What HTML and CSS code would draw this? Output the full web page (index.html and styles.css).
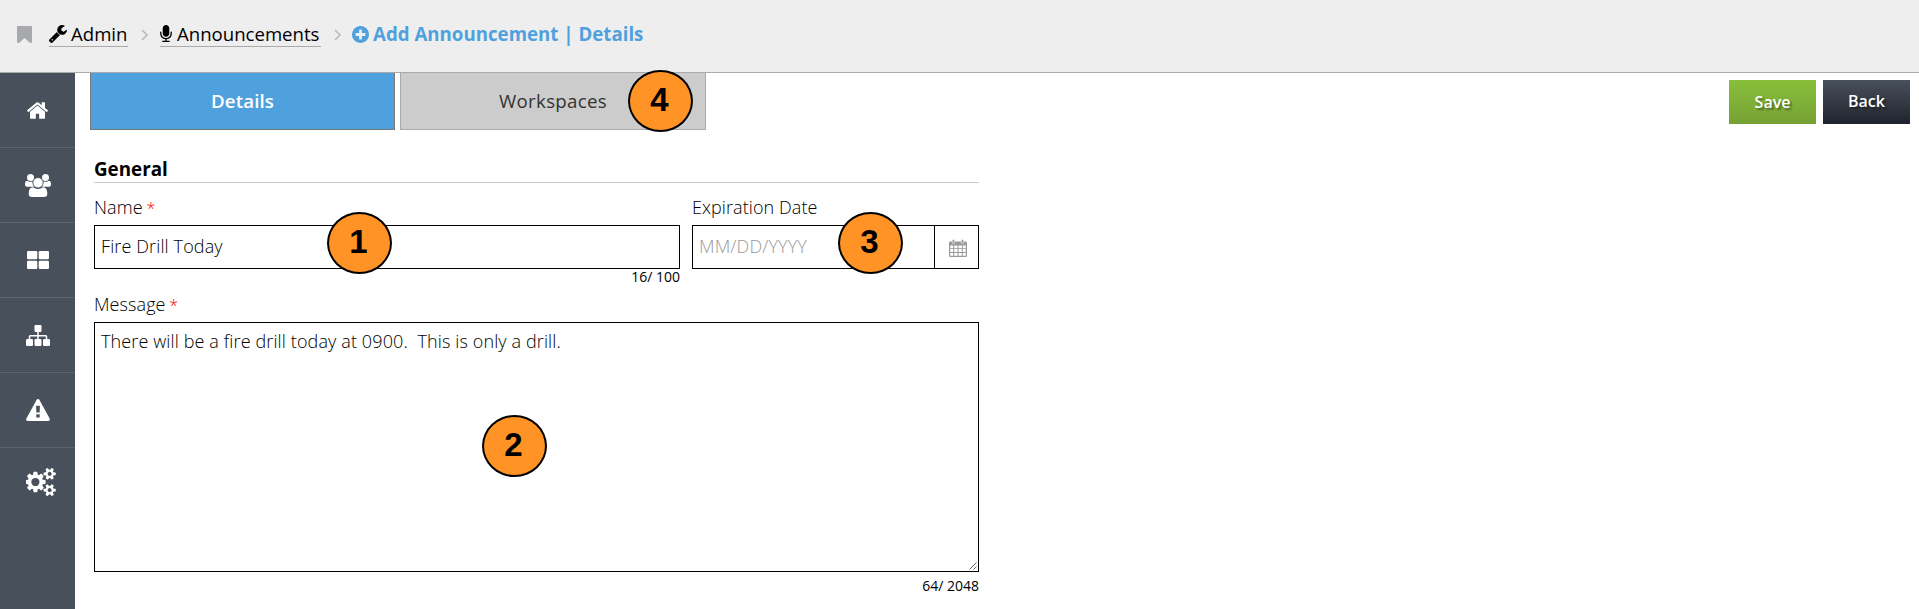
FILE: index.html
```html
<!DOCTYPE html>
<html lang="en">
<head>
<meta charset="utf-8">
<title>Add Announcement | Details</title>
<link rel="stylesheet" href="styles.css">
</head>
<body>
<header class="topbar">
  <svg class="ic-bookmark" viewBox="256 128 1280 1508" preserveAspectRatio="none"><path d="M1420 128q23 0 44 9 33 13 52.5 41t19.5 62v1289q0 34-19.5 62t-52.5 41q-19 8-44 8-48 0-83-32l-441-424-441 424q-36 33-83 33-23 0-44-9-33-13-52.5-41t-19.5-62v-1289q0-34 19.5-62t52.5-41q21-9 44-9h1048z"/></svg>
  <a class="crumb crumb-admin"><svg class="ic-wrench" viewBox="85 128 1641 1643"><path d="M448 1472q0-26-19-45t-45-19-45 19-19 45 19 45 45 19 45-19 19-45zm644-420l-682 682q-37 37-90 37-52 0-91-37l-106-108q-38-36-38-90 0-53 38-91l681-681q39 98 114.5 173.5t173.5 114.5zm634-435q0 39-23 106-47 134-164.5 217.5t-258.5 83.5q-185 0-316.5-131.5t-131.5-316.5 131.5-316.5 316.5-131.5q58 0 121.5 16.5t107.5 46.5q16 11 16 28t-16 28l-293 169v224l193 107q5-3 79-48.5t135.5-81 70.5-35.5q15 0 23.5 10t8.5 25z"/></svg><span class="crumb-text">Admin</span></a>
  <svg class="chevron" viewBox="0 0 7 12"><path d="M1 1l5 5-5 5"/></svg>
  <a class="crumb crumb-list"><svg class="ic-mic" viewBox="320 0 1152 1664"><path d="M1472 704v128q0 221-147.500 384.500t-364.500 187.500v132h256q26 0 45 19t19 45-19 45-45 19h-640q-26 0-45-19t-19-45 19-45 45-19h256v-132q-217-24-364.500-187.500t-147.500-384.500v-128q0-26 19-45t45-19 45 19 19 45v128q0 185 131.500 316.500t316.500 131.500 316.500-131.500 131.500-316.500v-128q0-26 19-45t45-19 45 19 19 45zm-256-384v512q0 132-94 226t-226 94-226-94-94-226v-512q0-132 94-226t226-94 226 94 94 226z"/></svg><span class="crumb-text">Announcements</span></a>
  <svg class="chevron" viewBox="0 0 7 12"><path d="M1 1l5 5-5 5"/></svg>
  <h1 class="title"><svg class="ic-plus" viewBox="128 128 1536 1536"><path d="M1344 960v-128q0-26-19-45t-45-19h-256v-256q0-26-19-45t-45-19h-128q-26 0-45 19t-19 45v256h-256q-26 0-45 19t-19 45v128q0 26 19 45t45 19h256v256q0 26 19 45t45 19h128q26 0 45-19t19-45v-256h256q26 0 45-19t19-45zm320-64q0 209-103 385.500t-279.500 279.500-385.500 103-385.500-103-279.500-279.500-103-385.500 103-385.500 279.500-279.500 385.500-103 385.500 103 279.500 279.500 103 385.500z"/></svg><span class="title-text">Add Announcement | Details</span></h1>
</header>
<div class="body">
  <nav class="sidebar">
    <a class="side-item"><svg class="ic-home" viewBox="89 253 1614 1283"><path d="M1472 992v480q0 26-19 45t-45 19h-384v-384h-256v384h-384q-26 0-45-19t-19-45v-480q0-1 .5-3t.5-3l575-474 575 474q1 2 1 6zm223-69l-62 74q-8 9-21 11h-3q-13 0-21-7l-692-577-692 577q-12 8-24 7-13-2-21-11l-62-74q-8-10-7-23.500t11-21.500l719-599q32-26 76-26t76 26l244 204v-195q0-14 9-23t23-9h192q14 0 23 9t9 23v408l219 182q10 8 11 21.500t-7 23.500z"/></svg></a>
    <a class="side-item"><svg class="ic-users" viewBox="0 0 26 23"><circle cx="5.500" cy="3.500" r="3.500"/><circle cx="20.500" cy="3.500" r="3.500"/><path d="M2.600 7Q5.500 8.600 7.500 7.200 7 10.400 9 12.800H3Q0 12.800 0 10.400 0 7.200 1.500 7zM23.400 7Q20.500 8.600 18.500 7.200 19 10.400 17 12.800h6Q26 12.800 26 10.400 26 7.200 24.500 7z"/><circle class="halo" cx="13" cy="8.700" r="5"/><path d="M8 13.200Q13 16.600 18 13.200 22.300 13 22.300 19.800 22.300 23 19 23H7Q3.700 23 3.700 19.800 3.700 13 8 13.200z"/></svg></a>
    <a class="side-item"><svg class="ic-grid" viewBox="0 0 22 18"><rect width="10.300" height="8.200" rx="1.200"/><rect x="11.700" width="10.300" height="8.200" rx="1.200"/><rect y="9.800" width="10.300" height="8.200" rx="1.200"/><rect x="11.700" y="9.800" width="10.300" height="8.200" rx="1.200"/></svg></a>
    <a class="side-item"><svg class="ic-sitemap" viewBox="0 0 24 21"><rect x="8.500" width="7" height="7" rx="1.200"/><rect y="14" width="7" height="7" rx="1.200"/><rect x="8.500" y="14" width="7" height="7" rx="1.200"/><rect x="17" y="14" width="7" height="7" rx="1.200"/><path class="wire" d="M12 6v9M3.500 15v-3.500q0-.8.8-.8h15.400q.8 0 .8.800V15"/></svg></a>
    <a class="side-item"><svg class="ic-warn" viewBox="0 0 1792 1664"><path d="M1024 1375v-190q0-14-9.500-23.500t-22.500-9.500h-192q-13 0-22.500 9.500t-9.500 23.500v190q0 14 9.500 23.500t22.500 9.500h192q13 0 22.500-9.500t9.500-23.500zm-2-374l18-459q0-12-10-19-13-11-24-11h-220q-11 0-24 11-10 7-10 21l17 457q0 10 10 16.500t24 6.500h185q14 0 23.500-6.500t10.500-16.500zm-14-934l768 1408q35 63-2 126-17 29-46.500 46t-63.500 17h-1536q-34 0-63.500-17t-46.500-46q-37-63-2-126l768-1408q17-31 47-49t65-18 65 18 47 49z"/></svg></a>
    <a class="side-item side-last"><svg class="ic-cogs" viewBox="0 16 1856 1760"><path d="M832 896q0-106-75-181t-181-75-181 75-75 181 75 181 181 75 181-75 75-181zm768 512q0-52-38-90t-90-38-90 38-38 90q0 53 37.500 90.500t90.500 37.500 90.500-37.500 37.500-90.500zm0-1024q0-52-38-90t-90-38-90 38-38 90q0 53 37.500 90.500t90.500 37.500 90.500-37.500 37.500-90.500zm-384 421v185q0 10-7 19.500t-16 10.500l-155 24q-11 35-32 76 34 48 90 115 7 11 7 20 0 12-7 19-23 30-82.500 89.500t-78.500 59.500q-11 0-21-7l-115-90q-37 19-77 31-11 108-23 155-7 24-30 24h-186q-11 0-20-7.500t-10-17.500l-23-153q-34-10-75-31l-118 89q-7 7-20 7-11 0-21-8-144-133-144-160 0-9 7-19 10-14 41-53t47-61q-23-44-35-82l-152-24q-10-1-17-9.500t-7-19.500v-185q0-10 7-19.500t16-10.500l155-24q11-35 32-76-34-48-90-115-7-11-7-20 0-12 7-20 22-30 82-89t79-59q11 0 21 7l115 90q34-18 77-32 11-108 23-154 7-24 30-24h186q11 0 20 7.500t10 17.500l23 153q34 10 75 31l118-89q8-7 20-7 11 0 21 8 144 133 144 160 0 8-7 19-12 16-42 54t-45 60q23 48 34 82l152 23q10 2 17 10.500t7 19.500zm640 533v140q0 16-149 31-12 27-30 52 51 113 51 138 0 4-4 7-122 71-124 71-8 0-46-47t-52-68q-20 2-30 2t-30-2q-14 21-52 68t-46 47q-2 0-124-71-4-3-4-7 0-25 51-138-18-25-30-52-149-15-149-31v-140q0-16 149-31 13-29 30-52-51-113-51-138 0-4 4-7 4-2 35-20t59-34 30-16q8 0 46 46.500t52 67.500q20-2 30-2t30 2q51-71 92-112l6-2q4 0 124 70 4 3 4 7 0 25-51 138 17 23 30 52 149 15 149 31zm0-1024v140q0 16-149 31-12 27-30 52 51 113 51 138 0 4-4 7-122 71-124 71-8 0-46-47t-52-68q-20 2-30 2t-30-2q-14 21-52 68t-46 47q-2 0-124-71-4-3-4-7 0-25 51-138-18-25-30-52-149-15-149-31v-140q0-16 149-31 13-29 30-52-51-113-51-138 0-4 4-7 4-2 35-20t59-34 30-16q8 0 46 46.500t52 67.500q20-2 30-2t30 2q51-71 92-112l6-2q4 0 124 70 4 3 4 7 0 25-51 138 17 23 30 52 149 15 149 31z"/></svg></a>
  </nav>
  <main class="content">
    <div class="toolbar">
      <div class="tabs">
        <a class="tab tab-active">Details</a>
        <a class="tab">Workspaces</a>
      </div>
      <div class="actions">
        <button class="btn btn-save">Save</button>
        <button class="btn btn-back">Back</button>
      </div>
    </div>
    <form class="form">
      <h2 class="section">General</h2>
      <div class="row">
        <div class="field field-name">
          <label class="label">Name <span class="req">*</span></label>
          <div class="input">Fire Drill Today</div>
          <div class="count">16/ 100</div>
        </div>
        <div class="field field-date">
          <label class="label">Expiration Date</label>
          <div class="input input-date"><span class="placeholder">MM/DD/YYYY</span><span class="picker"><svg class="ic-cal" viewBox="0 0 18 18"><path fill-rule="evenodd" d="M1.300 2.500h15.400q1.300 0 1.300 1.300v12.900q0 1.300-1.300 1.300H1.300Q0 18 0 16.700V3.800Q0 2.500 1.300 2.500zM1.200 6.500v2.700h3V6.500zM5.200 6.500v2.700h3.300V6.500zM9.500 6.500v2.700h3.300V6.500zM13.800 6.500v2.700h3V6.500zM1.200 10.100v3h3v-3zM5.200 10.100v3h3.300v-3zM9.500 10.100v3h3.300v-3zM13.800 10.100v3h3v-3zM1.200 14v2.800h3V14zM5.200 14v2.800h3.300V14zM9.500 14v2.800h3.300V14zM13.800 14v2.800h3V14z"/><rect class="ring" x="3.300" y=".4" width="2.400" height="4.200" rx="1"/><rect class="ring" x="12.300" y=".4" width="2.400" height="4.200" rx="1"/></svg></span></div>
        </div>
      </div>
      <div class="field field-message">
        <label class="label">Message <span class="req">*</span></label>
        <div class="textarea">There will be a fire drill today at 0900.&nbsp; This is only a drill.<svg class="grip" viewBox="0 0 8 8"><path d="M.5 7.500l7-7M4.500 7.500l3-3"/></svg></div>
        <div class="count count-message">64/ 2048</div>
      </div>
    </form>
  </main>
</div>
<div class="badge badge-1">1</div>
<div class="badge badge-2">2</div>
<div class="badge badge-3">3</div>
<div class="badge badge-4">4</div>
</body>
</html>
```
FILE: styles.css
```css
* { box-sizing: border-box; }
body {
  margin: 0;
  height: 609px;
  overflow: hidden;
  position: relative;
  display: flex;
  flex-direction: column;
  background: #fff;
  color: #000;
  font: 18px/24px "Open Sans", "Noto Sans", sans-serif;
}
svg { display: block; flex: none; fill: currentColor; }

.topbar {
  height: 73px;
  flex: none;
  display: flex;
  align-items: flex-start;
  padding: 22px 0 0 17px;
  background: #eee;
  border-bottom: 1px solid #aaa;
}
.ic-bookmark { width: 15px; height: 17px; margin: 4px 17px 0 0; color: #a7a9ac; }
.crumb { display: flex; height: 25px; border-bottom: 1px solid #aaa; }
.crumb-admin { width: 79px; }
.crumb-list { width: 161px; }
.ic-wrench { width: 18px; height: 18px; margin: 3px 4px 0 0; }
.ic-mic { width: 12px; height: 17px; margin: 3px 5px 0 0; }
.chevron { width: 7px; height: 12px; margin: 7px 12px 0 13px; fill: none; stroke: #bbb; stroke-width: 1.600; }
.title { display: flex; margin: 0 0 0 -1px; font-size: 18.700px; line-height: 24px; font-weight: 700; color: #4fa1de; }
.ic-plus { width: 17px; height: 17px; margin: 4px 4px 0 0; }
.crumb-text, .title-text { white-space: nowrap; }
.crumb-text { font-size: 18.600px; }

.body { flex: 1; display: flex; }
.sidebar { width: 75px; flex: none; background: #48505b; color: #fff; }
.side-item {
  height: 75px;
  display: flex;
  align-items: center;
  justify-content: center;
  border-bottom: 1px solid #5c646f;
}
.side-last { border-bottom: 0; padding: 0 0 7px 7px; }
.ic-home { width: 21px; height: 17px; }
.ic-users { width: 26px; height: 23px; }
.halo { stroke: #48505b; stroke-width: .5; }
.ic-grid { width: 22px; height: 18px; }
.ic-sitemap { width: 24px; height: 21px; }
.wire { fill: none; stroke: #fff; stroke-width: 1.500; }
.ic-warn { width: 24px; height: 22px; }
.ic-cogs { width: 30px; height: 28px; }

.content { flex: 1; padding-left: 15px; }
.toolbar { display: flex; justify-content: space-between; height: 57px; }
.tabs { display: flex; gap: 5px; }
.tab {
  width: 306px;
  height: 57px;
  font-size: 18.700px;
  line-height: 56px;
  letter-spacing: .3px;
  text-align: center;
  font-weight: 500;
  color: #333;
  background: #ccc;
  border: 1px solid #aaa;
  border-top: 0;
}
.tab-active { width: 305px; letter-spacing: .1px; color: #fff; font-weight: 600; background: #4fa1de; border-color: #777; }
.actions { display: flex; gap: 7px; padding: 7px 9px 0 0; }
.btn {
  width: 87px;
  height: 44px;
  padding: 0;
  border: 0;
  color: #fff;
  font: 600 16px/44px "Open Sans", "Noto Sans", sans-serif;
  text-shadow: 2px 2px 2px rgba(0, 0, 0, .4);
}
.btn-save { background: linear-gradient(#88bf3a, #76a135); }
.btn-back { padding-bottom: 1px; line-height: 43px; background: linear-gradient(#48505b, #20232d); }

.form { width: 889px; padding: 26px 0 0 4px; }
.section {
  margin: 0;
  height: 27px;
  font-size: 18.800px;
  line-height: 26px;
  font-weight: 700;
  border-bottom: 1px solid #ccc;
}
.row { display: flex; gap: 12px; padding-top: 12px; }
.field-name { width: 586px; }
.field-date { width: 287px; }
.label { display: block; height: 30px; line-height: 24px; font-weight: 300; letter-spacing: .08px; }
.req { color: #f00; font-size: 16px; margin-left: -1px; }
.input { display: flex; height: 44px; padding-left: 6px; line-height: 40px; font-weight: 300; letter-spacing: .12px; border: 1px solid #000; }
.placeholder { flex: 1; color: #999; }
.picker { width: 44px; padding-left: 2px; border-left: 1px solid #000; display: flex; align-items: center; justify-content: center; color: #999; }
.ring { stroke: #fff; stroke-width: .6; }
.ic-cal { width: 18px; height: 18px; margin-top: 2px; }
.count { height: 17px; text-align: right; font-size: 14px; line-height: 15px; }
.field-message { padding-top: 6px; }
.textarea {
  position: relative;
  height: 250px;
  padding: 6px;
  font-weight: 300;
  letter-spacing: .12px;
  border: 1px solid #000;
}
.grip { position: absolute; right: 1px; bottom: 1px; width: 8px; height: 8px; stroke: #555; stroke-width: .9; fill: none; }
.count-message { padding-top: 6px; }

.badge {
  position: absolute;
  width: 65px;
  height: 62px;
  padding-right: 2px;
  border: 2px solid #000;
  border-radius: 50%;
  background: #ff9326;
  text-align: center;
  font: 700 33px/56px "Liberation Sans", Arial, sans-serif;
}
.badge-1 { left: 327px; top: 212px; }
.badge-2 { left: 482px; top: 415px; }
.badge-3 { left: 838px; top: 212px; }
.badge-4 { left: 628px; top: 70px; }
```
